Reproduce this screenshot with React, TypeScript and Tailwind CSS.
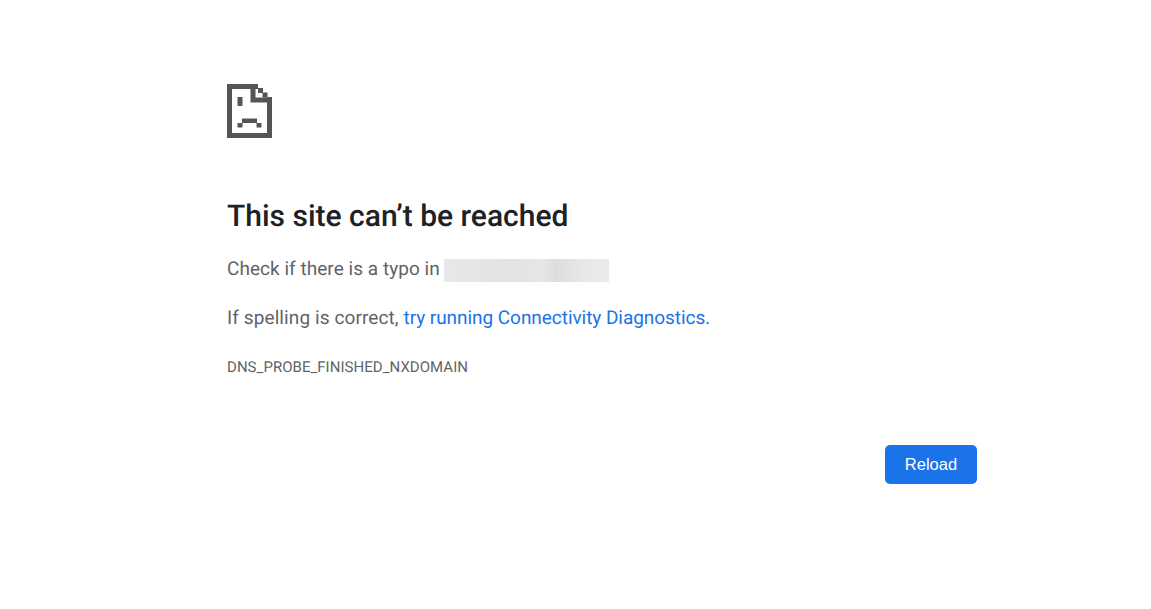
export default function App() {
  return (
    <div className="min-h-[609px] bg-white font-['Roboto',sans-serif] text-[#5f6368] [text-rendering:geometricPrecision]">
      <div className="ml-[227px] w-[750px] pt-[84px]">
        {/* sad file icon */}
        <svg width="45" height="54" viewBox="0 0 45 54" className="block" fill="#555555">
          <path d="M0 0H31V5H5V49H40V18.500H23.500V0H28.500V13.500H45V54H0Z" />
          <rect x="31" y="4" width="5" height="5" />
          <rect x="35.500" y="8.500" width="5" height="5" />
          <rect x="40" y="13" width="5" height="5" />
          <rect x="10.500" y="13" width="5" height="9" />
          <rect x="15" y="34.500" width="15" height="4.500" />
          <rect x="10.500" y="39" width="5" height="4.500" />
          <rect x="29.500" y="39" width="5" height="4.500" />
        </svg>
        <h1 className="mt-[60px] text-[30px] leading-[37px] font-medium text-[#202124]">This site can’t be reached</h1>
        <div className="mt-[20px] flex h-[29px] items-center text-[19px] tracking-[0.04px]">
          <span>Check if there is a typo in</span>
          <span className="mt-[1px] ml-[4px] h-[23px] w-[165px] bg-[linear-gradient(90deg,#e8e8e9_0%,#e3e3e4_40%,#e5e6e7_60%,#dcdddf_68%,#e8e8e9_85%,#ebebec_100%)]"></span>
        </div>
        <p className="mt-[19px] h-[29px] text-[19px] leading-[29px]">
          <span className="tracking-[0.1px]">If spelling is correct, </span>
          <span className="tracking-[-0.05px] text-[#1a73e8]">try running Connectivity Diagnostics</span>.
        </p>
        <div className="mt-[25px] text-[15px] leading-[20px] tracking-[0.04px]">DNS_PROBE_FINISHED_NXDOMAIN</div>
        <div className="mt-[68px] flex justify-end">
          <button className="h-[39px] w-[92px] rounded-[5px] bg-[#1a73e8] font-['Liberation_Sans',sans-serif] text-[16.5px] text-white">Reload</button>
        </div>
      </div>
    </div>
  );
}
